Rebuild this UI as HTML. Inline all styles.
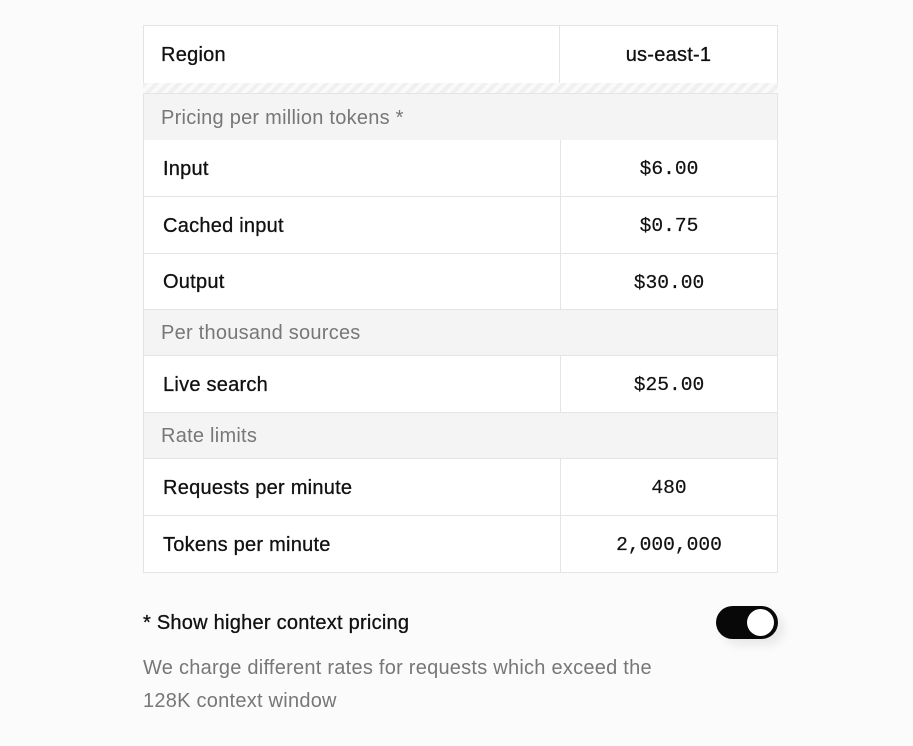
<!DOCTYPE html>
<html><head><meta charset="utf-8"><style>
body{margin:0;background:#fbfbfb;width:913px;height:746px;position:relative;font-family:"Liberation Sans",sans-serif;overflow:hidden;letter-spacing:0.25px}
.r{position:absolute;left:143px;width:633px;border:1px solid #e4e4e4;border-top:none;background:#fff;box-sizing:content-box}
.r .l{position:absolute;left:19px;top:2px;bottom:0;display:flex;align-items:center;font-size:20px;color:#111;-webkit-text-stroke:0.3px #111}
.r .v{position:absolute;left:416px;right:0;top:2px;bottom:0;border-left:1px solid #e4e4e4;display:flex;align-items:center;justify-content:center;font-family:"Liberation Mono",monospace;font-size:19.6px;color:#111;letter-spacing:0;margin-top:-2px;padding-top:2px;-webkit-text-stroke:0.2px #111}
.s{position:absolute;left:143px;width:633px;border:1px solid #e4e4e4;border-top:none;background:#f4f4f4}
.s span{position:absolute;left:17px;top:2px;bottom:0;display:flex;align-items:center;font-size:20px;color:#777}
</style></head><body>
<div class="r" style="top:25px;height:57px;border-top:1px solid #e4e4e4"><div class="l" style="left:17px">Region</div><div class="v" style="left:415px;font-family:'Liberation Sans',sans-serif;font-size:20px;letter-spacing:0.25px;-webkit-text-stroke:0.3px #111">us-east-1</div></div>
<div style="position:absolute;left:143px;top:83px;width:635px;height:10px;background:repeating-linear-gradient(135deg,#f0f0f0 0 4px,#fafafa 4px 8px)"></div>
<div class="s" style="top:93px;height:46px;border-top:1px solid #e4e4e4"><span>Pricing per million tokens *</span></div>
<div class="r" style="top:140px;height:56px"><div class="l">Input</div><div class="v">$6.00</div></div>
<div class="r" style="top:197px;height:56px"><div class="l">Cached input</div><div class="v">$0.75</div></div>
<div class="r" style="top:254px;height:55px"><div class="l">Output</div><div class="v">$30.00</div></div>
<div class="s" style="top:310px;height:45px"><span>Per thousand sources</span></div>
<div class="r" style="top:356px;height:56px"><div class="l">Live search</div><div class="v">$25.00</div></div>
<div class="s" style="top:413px;height:45px"><span>Rate limits</span></div>
<div class="r" style="top:459px;height:56px"><div class="l">Requests per minute</div><div class="v">480</div></div>
<div class="r" style="top:516px;height:56px"><div class="l">Tokens per minute</div><div class="v">2,000,000</div></div>
<div style="position:absolute;left:143px;top:612px;font-size:20px;color:#111;-webkit-text-stroke:0.3px #111">* Show higher context pricing</div>
<div style="position:absolute;left:716px;top:606px;width:62px;height:33px;border-radius:17px;background:#080808;box-shadow:6px 6px 10px rgba(0,0,0,.08)"><div style="position:absolute;right:4px;top:3px;width:27px;height:27px;border-radius:50%;background:#fff"></div></div>
<div style="position:absolute;left:143px;top:652px;width:530px;font-size:20px;line-height:33px;color:#777">We charge different rates for requests which exceed the 128K context window</div>
</body></html>
